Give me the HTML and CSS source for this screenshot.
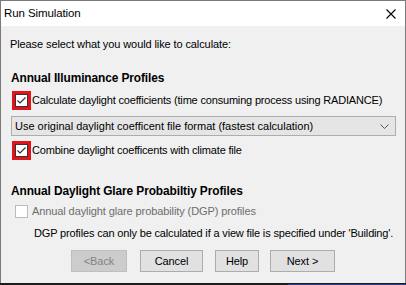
FILE: index.html
```html
<!DOCTYPE html>
<html lang="en">
<head>
    <meta charset="UTF-8">
    <title>Run Simulation</title>
    <link rel="stylesheet" href="styles.css">
</head>
<body>
<div class="window">
    <!-- title bar -->
    <div class="titlebar">
        <span class="title">Run Simulation</span>
        <svg class="close" width="10" height="10" viewBox="0 0 10 10">
            <path d="M0.5 0.5 L9.5 9.5 M9.5 0.5 L0.5 9.5" stroke="#000" stroke-width="1.1" fill="none"/>
        </svg>
    </div>

    <div class="client">
        <p class="intro">Please select what you would like to calculate:</p>

        <h2 class="group-title">Annual Illuminance Profiles</h2>

        <div class="check-row">
            <span class="highlight">
                <span class="box">
                    <svg width="11" height="11" viewBox="0 0 11 11">
                        <path d="M1.5 5.5 L4 8 L9.5 2.5" stroke="#333" stroke-width="1.2" fill="none"/>
                    </svg>
                </span>
            </span>
            <span class="label">Calculate daylight coefficients (time consuming process using RADIANCE)</span>
        </div>

        <div class="combo">
            <span>Use original daylight coefficent file format (fastest calculation)</span>
            <svg class="chevron" width="9" height="5" viewBox="0 0 9 5">
                <path d="M0.5 0.5 L4.5 4.5 L8.5 0.5" stroke="#555" stroke-width="1" fill="none"/>
            </svg>
        </div>

        <div class="check-row">
            <span class="highlight">
                <span class="box">
                    <svg width="11" height="11" viewBox="0 0 11 11">
                        <path d="M1.5 5.5 L4 8 L9.5 2.5" stroke="#333" stroke-width="1.2" fill="none"/>
                    </svg>
                </span>
            </span>
            <span class="label">Combine daylight coefficents with climate file</span>
        </div>

        <h2 class="group-title second">Annual Daylight Glare Probabiltiy Profiles</h2>

        <div class="check-row disabled">
            <span class="box plain"></span>
            <span class="label">Annual daylight glare probability (DGP) profiles</span>
        </div>

        <p class="note">DGP profiles can only be calculated if a view file is specified under 'Building'.</p>

        <!-- wizard buttons -->
        <div class="buttons">
            <button class="btn back" disabled>&lt;Back</button>
            <button class="btn cancel">Cancel</button>
            <button class="btn help">Help</button>
            <button class="btn next">Next &gt;</button>
        </div>
    </div>
</div>
<div class="behind">
    <span class="behind-text"></span>
</div>
</body>
</html>
```

FILE: styles.css
```css
body {
    margin: 0;
    width: 406px;
    height: 285px;
    overflow: hidden;
    background-color: #1c1c1c;
    font-family: "Liberation Sans", Arial, sans-serif;
    font-size: 11px;
    letter-spacing: -0.1px;
    color: #000;
}

.window {
    width: 404px;
    height: 282px;
    border: 1px solid #7a7a7a;
    border-bottom: none;
    background-color: #f0f0f0;
}

.titlebar {
    height: 25px;
    background-color: #fff;
    display: flex;
    align-items: center;
    justify-content: space-between;
    padding: 0 9px 0 3px;
}

.title {
    font-size: 11.5px;
    line-height: 15px;
}

.client {
    display: flex;
    flex-direction: column;
    align-items: flex-start;
    white-space: nowrap;
}

.intro {
    margin: 11px 0 0 9px;
    line-height: 15px;
}

.group-title {
    margin: 19px 0 0 10px;
    font-size: 11.9px;
    line-height: 15px;
    font-weight: bold;
}

.group-title.second {
    margin-top: 24px;
}

.check-row {
    display: flex;
    align-items: center;
    margin: 5px 0 0 11px;
    line-height: 15px;
    letter-spacing: -0.18px;
}

.highlight {
    width: 13px;
    height: 13px;
    border: 3px solid #e3131b;
    display: flex;
    margin-right: 1px;
}

.box {
    width: 11px;
    height: 11px;
    border: 1px solid #333;
    background-color: #fff;
    display: block;
}

.box svg {
    display: block;
}

.check-row.disabled {
    margin: 5px 0 0 14px;
    color: #6d6d6d;
    letter-spacing: -0.1px;
}

.box.plain {
    border-color: #bcbcbc;
    margin-right: 4px;
}

.combo {
    margin: 6px 0 0 10px;
    height: 18px;
    border: 1px solid #adadad;
    background-color: #e5e5e5;
    display: flex;
    align-items: center;
    justify-content: space-between;
    padding: 0 6px 0 3px;
    width: 374px;
    letter-spacing: 0;
}

.chevron {
    display: block;
}

.note {
    margin: 7px 0 0 33px;
    line-height: 15px;
    letter-spacing: -0.16px;
}

.buttons {
    display: flex;
    margin: 9px 0 0 70px;
}

.btn {
    height: 22px;
    font-family: inherit;
    font-size: 11px;
    letter-spacing: -0.1px;
    color: #000;
    background-color: #e1e1e1;
    border: 1px solid #adadad;
    padding: 0;
}

.btn.back {
    width: 56px;
    background-color: #cccccc;
    border-color: #bfbfbf;
    color: #838383;
}

.btn.cancel {
    width: 63px;
    margin-left: 13px;
}

.btn.help {
    width: 44px;
    margin-left: 12px;
}

.btn.next {
    width: 65px;
    margin-left: 11px;
}

.behind {
    height: 3px;
    display: flex;
    justify-content: flex-end;
}

.behind-text {
    width: 118px;
    height: 2px;
    margin-top: 1px;
    background-color: #2b3f8f;
}
```
